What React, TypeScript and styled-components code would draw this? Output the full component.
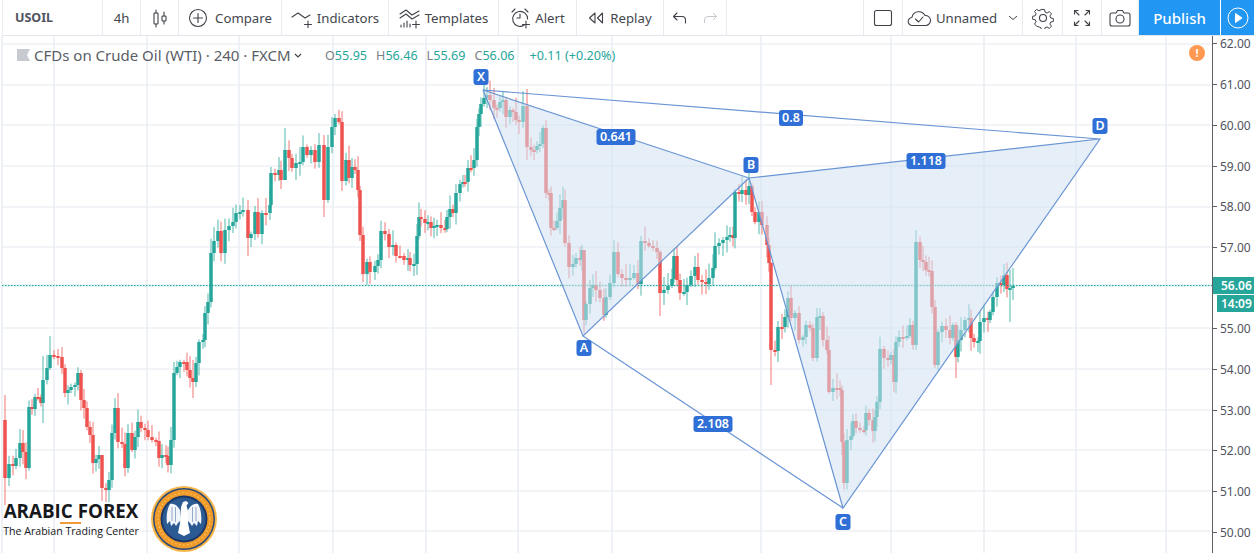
import React from 'react';
import styled, { createGlobalStyle } from 'styled-components';

const GlobalStyle = createGlobalStyle`
  html, body {
    margin: 0;
    padding: 0;
    background: #ffffff;
    overflow: hidden;
  }
`;

const FONT = `"Noto Sans", "Open Sans", sans-serif`;
const GREEN = '#26a69a';
const RED = '#ef5350';

const Page = styled.div`
  width: 1254px;
  height: 553px;
  display: flex;
  flex-direction: column;
  overflow: hidden;
  font-family: ${FONT};
  color: #43464d;
`;

const Toolbar = styled.header`
  flex: 0 0 35px;
  margin-left: 2px;
  display: flex;
  border-bottom: 1px solid #e3e6ec;
  border-left: 1px solid #eceef2;
`;

const ToolItem = styled.div<{ $w: number; $gap?: number; $start?: boolean }>`
  flex: 0 0 ${(p) => p.$w}px;
  box-sizing: border-box;
  display: flex;
  align-items: center;
  justify-content: ${(p) => (p.$start ? 'flex-start' : 'center')};
  gap: ${(p) => p.$gap ?? 6}px;
  border-right: 1px solid #e9ebef;
  font-size: 13.2px;
  white-space: nowrap;
  color: #43464d;
`;

const Symbol = styled.span`
  font-weight: 700;
  font-size: 12.5px;
  padding-left: 12px;
  color: #50535e;
`;

const Spacer = styled.div`
  flex: 1;
  border-right: 1px solid #e9ebef;
`;

const PublishButton = styled.button`
  flex: 0 0 81px;
  border: none;
  padding: 0;
  background: #2196f3;
  color: #ffffff;
  font-family: ${FONT};
  font-size: 15px;
  font-weight: 500;
`;

const PlayButton = styled.button`
  flex: 0 0 33px;
  margin-left: 1px;
  border: none;
  padding: 0;
  background: #2196f3;
  display: flex;
  align-items: center;
  justify-content: center;
`;

const ChartRow = styled.main`
  flex: 1;
  min-height: 0;
  display: flex;
`;

const Plot = styled.section`
  flex: 0 0 1212px;
  position: relative;
  overflow: hidden;
`;

const ChartSvg = styled.svg`
  display: block;
  width: 1212px;
  height: 517px;
`;

const Legend = styled.div`
  position: absolute;
  left: 17px;
  top: 10px;
  height: 18px;
  display: flex;
  align-items: center;
  white-space: nowrap;
`;

const Title = styled.span`
  margin-left: 4px;
  font-size: 15px;
  color: #5a5d66;
`;

const Ohlc = styled.div`
  position: absolute;
  left: 325px;
  top: 10px;
  height: 18px;
  display: flex;
  align-items: center;
  gap: 9px;
  font-size: 12.6px;
  white-space: nowrap;
  color: ${GREEN};
`;

const OhlcKey = styled.span`
  color: #7b7f87;
`;

const Change = styled.span`
  margin-left: 6px;
`;

const Warning = styled.div`
  position: absolute;
  left: 1189px;
  top: 9px;
  width: 16px;
  height: 16px;
  border-radius: 50%;
  background: #ff9850;
  color: #ffffff;
  font-size: 11px;
  font-weight: 700;
  line-height: 16px;
  text-align: center;
`;

const PatternLabel = styled.div<{ $x: number; $y: number; $w: number }>`
  position: absolute;
  left: ${(p) => p.$x}px;
  top: ${(p) => p.$y - 36}px;
  width: ${(p) => p.$w}px;
  height: 16px;
  transform: translate(-50%, -50%);
  border-radius: 3px;
  background: #2f6fd6;
  color: #ffffff;
  font-size: 12.5px;
  font-weight: 600;
  line-height: 16px;
  text-align: center;
`;

const Brand = styled.div`
  position: absolute;
  left: 2px;
  bottom: 15px;
  width: 138px;
  display: flex;
  flex-direction: column;
  align-items: center;
  color: #16181c;
`;

const BrandName = styled.div`
  font-family: "Open Sans", sans-serif;
  font-size: 18.8px;
  font-weight: 700;
  line-height: 22px;
  white-space: nowrap;
`;

const BrandRule = styled.div`
  align-self: flex-start;
  margin-left: 58px;
  width: 21px;
  height: 2px;
  background: #f29a38;
`;

const BrandLine = styled.div`
  font-family: "Open Sans", sans-serif;
  font-size: 10.6px;
  font-weight: 400;
  line-height: 14px;
  white-space: nowrap;
`;

const Medal = styled.svg`
  position: absolute;
  left: 150px;
  bottom: 0;
  width: 68px;
  height: 68px;
`;

const Axis = styled.aside`
  flex: 1;
  position: relative;
  box-sizing: border-box;
  border-left: 1px solid #5d6067;
  overflow: hidden;
`;

const AxisTicks = styled.div`
  margin-top: -12.4px;
  display: flex;
  flex-direction: column;
`;

const AxisTick = styled.div`
  flex: 0 0 40.7px;
  display: flex;
  align-items: center;
  gap: 3px;
  font-size: 12px;
  color: #50535e;

  &::before {
    content: '';
    width: 4px;
    height: 1px;
    background: #5d6067;
  }
`;

const PriceBadge = styled.div<{ $top: number; $left: number }>`
  position: absolute;
  top: ${(p) => p.$top - 36}px;
  left: ${(p) => p.$left}px;
  right: 0;
  height: 17px;
  padding-left: ${(p) => 8 - p.$left}px;
  background: ${GREEN};
  color: #ffffff;
  font-size: 12px;
  font-weight: 600;
  line-height: 17px;
`;

// [x, close] read off the chart, y in page pixels
const SERIES: [number, number][] = [
  [5, 420], [5, 478], [9, 464], [13, 466], [16, 458], [20, 443], [23, 452], [26, 468], [29, 407], [32, 409], [35, 397], [38, 397],
  [41, 403], [43, 380], [47, 368], [50, 355], [54, 356], [58, 357], [62, 368], [65, 393], [68, 390], [71, 387], [75, 385], [78, 373],
  [81, 400], [84, 408], [87, 427], [90, 435], [93, 463], [96, 459], [99, 455], [102, 488], [106, 490], [109, 480], [112, 433],
  [115, 408], [118, 442], [122, 444], [125, 468], [128, 433], [132, 450], [135, 437], [138, 422], [141, 428], [145, 430], [148, 437],
  [152, 440], [156, 441], [159, 458], [162, 455], [166, 456], [168, 465], [171, 440], [174, 373], [177, 367], [180, 362], [184, 362],
  [187, 370], [190, 378], [193, 382], [196, 363], [199, 342], [203, 340], [205, 313], [208, 302], [211, 253], [214, 241], [218, 231],
  [221, 253], [225, 230], [229, 226], [233, 222], [236, 213], [240, 212], [243, 210], [248, 238], [251, 234], [255, 212], [258, 234],
  [262, 213], [266, 213], [270, 205], [271, 173], [275, 175], [279, 170], [281, 180], [285, 150], [289, 158], [292, 168], [296, 163],
  [300, 162], [303, 147], [307, 155], [311, 150], [315, 162], [319, 145], [324, 200], [328, 147], [332, 127], [335, 118], [339, 122],
  [342, 181], [346, 160], [349, 178], [352, 167], [355, 170], [358, 190], [360, 235], [363, 274], [367, 262], [370, 272], [375, 266],
  [378, 260], [381, 231], [385, 234], [389, 247], [393, 245], [396, 256], [400, 256], [404, 260], [408, 258], [410, 265], [414, 264],
  [417, 236], [419, 217], [421, 219], [425, 223], [428, 222], [431, 228], [434, 226], [437, 225], [441, 228], [445, 229], [447, 217],
  [450, 209], [453, 213], [456, 193], [460, 184], [463, 182], [465, 182], [468, 168], [471, 168], [474, 160], [477, 127], [479, 114],
  [481, 104], [484, 98], [487, 95], [490, 100], [494, 108], [497, 108], [500, 102], [503, 100], [506, 117], [510, 110], [513, 112],
  [516, 120], [519, 122], [523, 106], [527, 147], [531, 150], [534, 150], [537, 146], [540, 144], [543, 128], [546, 193], [549, 193],
  [551, 228], [554, 228], [557, 221], [560, 208], [563, 200], [565, 243], [569, 267], [573, 264], [576, 258], [580, 260], [582, 250],
  [584, 320], [586, 304], [590, 288], [593, 285], [596, 290], [600, 298], [604, 315], [606, 297], [610, 283], [614, 252], [618, 274],
  [622, 278], [626, 280], [630, 278], [634, 273], [638, 284], [641, 241], [645, 243], [649, 246], [653, 248], [657, 252], [660, 293],
  [664, 290], [668, 286], [672, 279], [674, 256], [677, 280], [680, 293], [684, 292], [687, 285], [691, 276], [695, 267], [698, 280],
  [702, 282], [706, 284], [709, 278], [713, 268], [715, 246], [719, 243], [723, 240], [727, 237], [730, 235], [733, 238], [735, 192],
  [739, 194], [742, 190], [746, 195], [749, 186], [752, 212], [755, 222], [759, 212], [762, 225], [767, 245], [769, 263], [771, 350],
  [775, 351], [778, 327], [782, 327], [785, 317], [788, 298], [791, 318], [795, 313], [799, 340], [803, 337], [806, 325], [810, 328],
  [813, 358], [817, 317], [820, 316], [823, 340], [827, 350], [829, 392], [833, 388], [837, 388], [840, 390], [842, 442], [844, 483],
  [847, 440], [851, 436], [853, 421], [856, 428], [860, 430], [864, 430], [866, 413], [869, 420], [873, 431], [875, 417], [877, 402],
  [880, 349], [884, 358], [888, 360], [891, 355], [894, 382], [896, 342], [899, 337], [903, 337], [907, 336], [910, 325], [913, 345],
  [916, 242], [920, 260], [923, 262], [926, 270], [929, 271], [932, 307], [935, 365], [938, 332], [942, 326], [946, 330], [950, 338],
  [953, 325], [956, 357], [958, 340], [961, 330], [965, 320], [969, 318], [971, 338], [974, 342], [978, 341], [980, 322], [984, 318],
  [988, 320], [990, 312], [993, 297], [997, 283], [1001, 285], [1004, 275], [1007, 289], [1010, 288], [1013, 286],
];

// wicks that stand out in the picture: x -> [high, low]
const WICKS: Record<number, [number, number]> = {
  5: [395, 505], 43: [356, 423], 50: [336, 370], 102: [480, 501], 193: [360, 398], 248: [200, 256], 285: [128, 160],
  324: [135, 217], 335: [114, 135], 527: [89, 160], 584: [250, 333], 660: [250, 316], 771: [262, 385], 845: [440, 505],
  916: [230, 350], 935: [300, 368], 956: [322, 378], 1004: [264, 292], 1010: [270, 322], 1013: [268, 300],
};

let seed = 17;
const rand = (max: number) => {
  seed = (seed * 1103 + 12345) % 65536;
  return (seed / 65536) * max;
};

const CANDLES = SERIES.slice(1).map(([x, close], i) => {
  const open = SERIES[i][1];
  const top = Math.min(open, close);
  const bottom = Math.max(open, close);
  const [high, low] = WICKS[x] ?? [top - 2 - rand(13), bottom + 2 + rand(11)];
  return { x, top, height: Math.max(bottom - top, 2), high, low, up: close < open };
});

const H_GRID = [44, 85, 125, 166, 207, 247, 328, 369, 410, 450, 491, 531];
const V_GRID = [2, 54, 147, 239, 333, 426, 518, 612, 761, 891, 984, 1076, 1166];
// the 56.00 label sits behind the last-price badge, so the row stays empty
const PRICES = ['62.00', '61.00', '60.00', '59.00', '58.00', '57.00', '', '55.00', '54.00', '53.00', '52.00', '51.00', '50.00'];

const P = {
  X: '483,90',
  A: '583,336',
  B: '749,178',
  C: '843,508',
  D: '1100,139',
};

const Icon = ({ w = 20, h = 20, children }: { w?: number; h?: number; children: React.ReactNode }) => (
  <svg width={w} height={h} viewBox={`0 0 ${w} ${h}`} fill="none" stroke="#3f4249" strokeWidth="1.1" strokeLinecap="round" strokeLinejoin="round">
    {children}
  </svg>
);

const Chart = () => (
  <ChartSvg viewBox="0 36 1212 517">
    {H_GRID.map((y) => (
      <line key={y} x1="2" x2="1212" y1={y} y2={y} stroke="#eef1f5" strokeWidth="1.5" />
    ))}
    {V_GRID.map((x) => (
      <line key={x} x1={x} x2={x} y1="36" y2="553" stroke="#e9edf3" strokeWidth="1.5" />
    ))}
    <rect x="2" y="284" width="1210" height="3" fill="#e3f5f5" />
    {CANDLES.map((c, i) => (
      <g key={i} fill={c.up ? GREEN : RED} stroke={c.up ? GREEN : RED}>
        <line x1={c.x} x2={c.x} y1={c.high} y2={c.low} strokeWidth="1" strokeOpacity="0.8" />
        <rect x={c.x - 1.75} y={c.top} width="3.5" height={c.height} stroke="none" />
      </g>
    ))}
    <line x1="2" x2="1212" y1="285.5" y2="285.5" stroke={GREEN} strokeWidth="1" strokeDasharray="1.5 1.5" />
    <polygon points={`${P.X} ${P.A} ${P.B}`} fill="rgb(209,226,242)" fillOpacity="0.54" />
    <polygon points={`${P.B} ${P.C} ${P.D}`} fill="rgb(209,226,242)" fillOpacity="0.54" />
    <polyline points={`${P.D} ${P.X} ${P.B} ${P.D} ${P.C} ${P.B}`} fill="none" stroke="#6a95d4" strokeWidth="1.2" />
    <polyline points={`${P.B} ${P.A} ${P.X}`} fill="none" stroke="#6a95d4" strokeWidth="1.2" />
    <polyline points={`${P.A} ${P.C}`} fill="none" stroke="#6a95d4" strokeWidth="1.2" />
  </ChartSvg>
);

const MedalLogo = () => (
  <Medal viewBox="0 0 68 68">
    <circle cx="34" cy="34" r="33" fill="#f6b84a" />
    <circle cx="34" cy="34" r="31" fill="#2b4a7c" />
    <circle cx="34" cy="34" r="29.5" fill="#f09a2a" />
    <circle cx="34" cy="34" r="26" fill="none" stroke="#f8c566" strokeWidth="1.2" strokeDasharray="1.5 2.5" />
    <circle cx="34" cy="34" r="23.5" fill="#1a3766" />
    <circle cx="34" cy="34" r="21.5" fill="#2c5a92" />
    <path d="M30 25 C27 20 24 18 20 19 C17 24 16 32 17 39 L20 36 L21 41 L24 38 L26 41 L28 38 L31 35 Z" fill="#f2f5f9" />
    <path d="M38 25 C41 20 44 18 48 19 C51 24 52 32 51 39 L48 36 L47 41 L44 38 L42 41 L40 38 L37 35 Z" fill="#f2f5f9" />
    <path d="M31 22 L33 17 L36 16 L38.500 18 L36.500 20.500 L38 26 L38 38 L40 48 L34 51 L28 48 L30 38 Z" fill="#ffffff" />
    <path d="M22 22 L22 36 M25.500 22 L25.500 37 M46 22 L46 36 M42.500 22 L42.500 37" stroke="#7b96ba" strokeWidth="0.8" />
  </Medal>
);

export default function App() {
  return (
    <Page>
      <GlobalStyle />
      <Toolbar>
        <ToolItem $w={100} $start>
          <Symbol>USOIL</Symbol>
        </ToolItem>
        <ToolItem $w={38}>4h</ToolItem>
        <ToolItem $w={38}>
          <Icon w={16} h={20}>
            <path d="M4 2v3M4 16v3M12 4v4M12 13v3" />
            <rect x="2" y="5" width="4" height="11" rx="0.8" />
            <rect x="10" y="8" width="4" height="5" rx="0.8" />
          </Icon>
        </ToolItem>
        <ToolItem $w={103} $gap={7}>
          <Icon w={20} h={20}>
            <circle cx="10" cy="10" r="8.5" />
            <path d="M10 5.500v9M5.500 10h9" />
          </Icon>
          Compare
        </ToolItem>
        <ToolItem $w={107} $gap={2}>
          <Icon w={24} h={20}>
            <path d="M1 9l6-4 7 5 5-3" />
            <path d="M17 13v7M13.500 16.500h7" />
          </Icon>
          Indicators
        </ToolItem>
        <ToolItem $w={110} $gap={4}>
          <Icon w={22} h={22}>
            <path d="M1 7l6-4 6 5 7-4M1 11l6-4 6 5 7-4" />
            <path d="M2 20v-2M5 20v-4M8 20v-6M11 20v-3" />
            <path d="M17 14v7M13.500 17.500h7" />
          </Icon>
          Templates
        </ToolItem>
        <ToolItem $w={78} $gap={4}>
          <Icon w={21} h={22}>
            <path d="M14 18.300A7.500 7.500 0 1 1 17.600 12" />
            <path d="M10 7v4H7M2 5l3-3M15 2l3 3" />
            <path d="M16 14v7M12.500 17.500h7" />
          </Icon>
          Alert
        </ToolItem>
        <ToolItem $w={87} $gap={6}>
          <Icon w={16} h={14}>
            <path d="M7 2L1.500 7 7 12zM14.500 2L9.500 7l5 5z" />
          </Icon>
          Replay
        </ToolItem>
        <ToolItem $w={63} $gap={16}>
          <Icon w={15} h={14}>
            <path d="M5 2L1.500 5.500 5 9M1.500 5.500H10a3.500 3.500 0 0 1 3.500 3.500v3" />
          </Icon>
          <svg width="15" height="14" viewBox="0 0 15 14" fill="none" stroke="#c4c7cd" strokeWidth="1">
            <path d="M10 2l3.500 3.500L10 9M13.500 5.500H5a3.500 3.500 0 0 0-3.500 3.500v3" />
          </svg>
        </ToolItem>
        <Spacer />
        <ToolItem $w={39}>
          <Icon w={20} h={18}>
            <rect x="1.500" y="1.500" width="17" height="15" rx="2" />
          </Icon>
        </ToolItem>
        <ToolItem $w={120} $gap={4}>
          <Icon w={25} h={18}>
            <path d="M7 16.500H5.500a4 4 0 0 1-.6-8A7 7 0 0 1 18 6.500a5 5 0 0 1 1 10z" />
            <path d="M8.500 10l3 3 4.500-5" />
          </Icon>
          Unnamed
          <svg width="10" height="6" viewBox="0 0 10 6" fill="none" stroke="#3f4249" strokeWidth="1" style={{ marginLeft: 7 }}>
            <path d="M1 1l4 3.500L9 1" />
          </svg>
        </ToolItem>
        <ToolItem $w={40}>
          <Icon w={22} h={22}>
            <circle cx="11" cy="11" r="3.500" />
            <path d="M9.300 1.500h3.400l.6 3 2.200 1 2.600-1.600 2.300 2.400-1.700 2.500.9 2.200 2.900.6v3.300l-2.900.6-.9 2.200 1.700 2.500-2.300 2.400-2.600-1.700-2.200.9-.6 3H9.300l-.6-3-2.200-.9L3.900 20.100 1.600 17.700l1.700-2.500-.9-2.200-2.900-.6V9.100l2.900-.6.9-2.200-1.700-2.500L3.900 1.400l2.600 1.600 2.200-1z" transform="translate(1.100 1.100) scale(0.9)" />
          </Icon>
        </ToolItem>
        <ToolItem $w={39}>
          <Icon w={18} h={18}>
            <path d="M1.500 1.500l4.500 4.500M1.500 1.500h3.500M1.500 1.500V5M16.500 1.500L12 6M16.500 1.500H13M16.500 1.500V5M1.500 16.500L6 12M1.500 16.500H5M1.500 16.500V13M16.500 16.500L12 12M16.500 16.500H13M16.500 16.500V13" />
          </Icon>
        </ToolItem>
        <ToolItem $w={37}>
          <Icon w={22} h={18}>
            <path d="M3 4h4l1.500-2.500h5L15 4h4a2 2 0 0 1 2 2v9a2 2 0 0 1-2 2H3a2 2 0 0 1-2-2V6a2 2 0 0 1 2-2z" />
            <circle cx="11" cy="10" r="4" />
          </Icon>
        </ToolItem>
        <PublishButton>Publish</PublishButton>
        <PlayButton>
          <svg width="22" height="22" viewBox="0 0 22 22" fill="none" stroke="#ffffff" strokeWidth="1">
            <circle cx="11" cy="11" r="10" />
            <path d="M8.500 6.500L15 11l-6.500 4.500z" fill="#ffffff" />
          </svg>
        </PlayButton>
      </Toolbar>
      <ChartRow>
        <Plot>
          <Chart />
          <Legend>
            <svg width="13" height="12" viewBox="0 0 13 12">
              <path d="M0 0h13l-3 6 3 6H0z" fill="#c8cad2" />
            </svg>
            <Title>CFDs on Crude Oil (WTI) · 240 · FXCM</Title>
            <svg width="8" height="5" viewBox="0 0 8 5" fill="none" stroke="#3f4249" strokeWidth="1.200" style={{ marginLeft: 3 }}>
              <path d="M1 1l3 3 3-3" />
            </svg>
          </Legend>
          <Ohlc>
            <span><OhlcKey>O</OhlcKey>55.95</span>
            <span><OhlcKey>H</OhlcKey>56.46</span>
            <span><OhlcKey>L</OhlcKey>55.69</span>
            <span><OhlcKey>C</OhlcKey>56.06</span>
            <Change>+0.11 (+0.20%)</Change>
          </Ohlc>
          <Warning>!</Warning>
          <PatternLabel $x={481} $y={77} $w={15}>X</PatternLabel>
          <PatternLabel $x={584} $y={348} $w={15}>A</PatternLabel>
          <PatternLabel $x={751} $y={165} $w={15}>B</PatternLabel>
          <PatternLabel $x={843} $y={522} $w={15}>C</PatternLabel>
          <PatternLabel $x={1100} $y={126} $w={15}>D</PatternLabel>
          <PatternLabel $x={616} $y={137} $w={39}>0.641</PatternLabel>
          <PatternLabel $x={791} $y={118} $w={24}>0.8</PatternLabel>
          <PatternLabel $x={926} $y={161} $w={39}>1.118</PatternLabel>
          <PatternLabel $x={713} $y={424} $w={39}>2.108</PatternLabel>
          <Brand>
            <BrandName>ARABIC FOREX</BrandName>
            <BrandRule />
            <BrandLine>The Arabian Trading Center</BrandLine>
          </Brand>
          <MedalLogo />
        </Plot>
        <Axis>
          <AxisTicks>
            {PRICES.map((price, i) => (
              <AxisTick key={i}>{price}</AxisTick>
            ))}
          </AxisTicks>
          <PriceBadge $top={277} $left={0}>56.06</PriceBadge>
          <PriceBadge $top={295} $left={4}>14:09</PriceBadge>
        </Axis>
      </ChartRow>
    </Page>
  );
}
